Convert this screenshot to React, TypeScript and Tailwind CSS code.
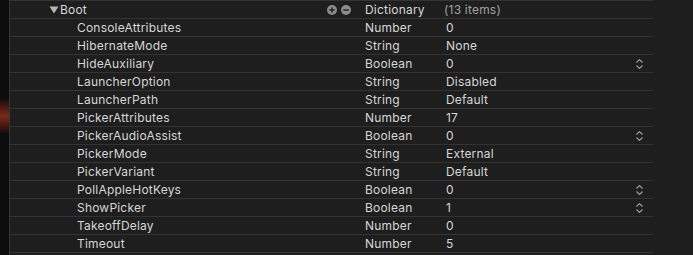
import React from "react";

type Row = { key: string; type: string; value: string; stepper?: boolean };

const rows: Row[] = [
  { key: "ConsoleAttributes", type: "Number", value: "0" },
  { key: "HibernateMode", type: "String", value: "None" },
  { key: "HideAuxiliary", type: "Boolean", value: "0", stepper: true },
  { key: "LauncherOption", type: "String", value: "Disabled" },
  { key: "LauncherPath", type: "String", value: "Default" },
  { key: "PickerAttributes", type: "Number", value: "17" },
  { key: "PickerAudioAssist", type: "Boolean", value: "0", stepper: true },
  { key: "PickerMode", type: "String", value: "External" },
  { key: "PickerVariant", type: "String", value: "Default" },
  { key: "PollAppleHotKeys", type: "Boolean", value: "0", stepper: true },
  { key: "ShowPicker", type: "Boolean", value: "1", stepper: true },
  { key: "TakeoffDelay", type: "Number", value: "0" },
  { key: "Timeout", type: "Number", value: "5" },
];

function Stepper() {
  return (
    <svg width="9" height="12" viewBox="0 0 9 12" className="text-[#9a9a9a] shrink-0">
      <path d="M1.5 4.5 L4.5 1.5 L7.5 4.5" fill="none" stroke="currentColor" strokeWidth="1.2" />
      <path d="M1.5 7.5 L4.5 10.5 L7.5 7.5" fill="none" stroke="currentColor" strokeWidth="1.2" />
    </svg>
  );
}

function CircleBtn({ plus }: { plus?: boolean }) {
  return (
    <svg width="10" height="10" viewBox="0 0 10 10" className="shrink-0">
      <circle cx="5" cy="5" r="5" fill="#8c8c8c" />
      <rect x="2.3" y="4.3" width="5.4" height="1.4" fill="#1e1e1e" />
      {plus && <rect x="4.3" y="2.3" width="1.4" height="5.4" fill="#1e1e1e" />}
    </svg>
  );
}

export default function App() {
  return (
    <div
      className="flex w-[693px] h-[255px] bg-[#1e1e1e] overflow-hidden text-[12px] text-[#d6d6d6] tracking-[0.2px]"
      style={{ fontFamily: "Inter, 'Liberation Sans', sans-serif" }}
    >
      <div className="w-[9px] shrink-0 h-full bg-[#0c0c0c] flex flex-col">
        <div className="h-[98px]" />
        <div className="h-[36px] bg-[linear-gradient(180deg,#0c0c0c_0%,#4a1a10_25%,#7a2a18_50%,#4a1810_75%,#0c0c0c_100%)]" />
      </div>
      <div className="w-px shrink-0 h-full bg-[#363636]" />
      <div className="w-[643px] shrink-0 flex flex-col border-t border-[#333333]">
        <div className="h-[18px] border-b border-[#333333] flex items-center whitespace-nowrap">
          <div className="w-[39px] shrink-0" />
          <svg width="10" height="8" viewBox="0 0 10 8" className="mr-[1px] shrink-0">
            <path d="M0.5 0.5 L9.5 0.5 L5 7.5 Z" fill="#b5b5b5" />
          </svg>
          <span className="w-[267px] shrink-0">Boot</span>
          <div className="flex gap-[4px] w-[38px] shrink-0">
            <CircleBtn plus />
            <CircleBtn />
          </div>
          <span className="w-[79px] shrink-0">Dictionary</span>
          <span className="text-[#a0a0a0] shrink-0">(13 items)</span>
        </div>
        {rows.map((r) => (
          <div key={r.key} className="h-[18px] border-b border-[#333333] flex items-center whitespace-nowrap">
            <div className="w-[67px] shrink-0" />
            <span className="w-[288px] shrink-0">{r.key}</span>
            <span className="w-[81px] shrink-0">{r.type}</span>
            <span className="w-[189px] shrink-0">{r.value}</span>
            {r.stepper && <Stepper />}
          </div>
        ))}
      </div>
    </div>
  );
}
